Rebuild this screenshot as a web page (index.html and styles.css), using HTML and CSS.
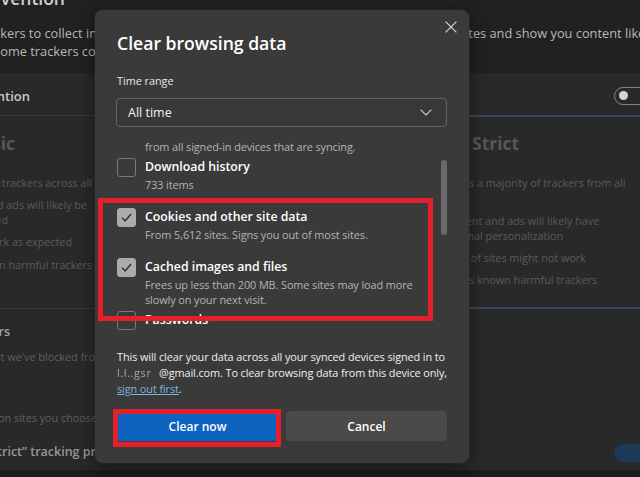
FILE: index.html
```html
<!DOCTYPE html>
<html lang="en">
<head>
<meta charset="utf-8">
<title>Clear browsing data</title>
<link rel="stylesheet" href="styles.css">
</head>
<body>
<div class="page">
  <section class="band intro">
    <div class="cell left">
      <div class="ln h-big">Tracking prevention</div>
      <div class="ln t-intro intro-l1">Websites use trackers to collect info</div>
      <div class="ln t-intro intro-l2">about your browsing. Some trackers collect</div>
    </div>
    <div class="cell"></div>
    <div class="cell right">
      <div class="ln t-intro intro-r1">sites and show you content like personalized ads.</div>
    </div>
  </section>

  <section class="band head">
    <div class="cell left">
      <div class="ln h-sec head-l">Tracking prevention</div>
    </div>
    <div class="cell"></div>
    <div class="cell right">
      <div class="toggle off head-t"><span class="knob"></span></div>
    </div>
  </section>

  <section class="band cards">
    <div class="cell left card-basic">
      <div class="ln h-card basic-h">Basic</div>
      <div class="ln bl b1">Allows most trackers across all</div>
      <div class="ln bl b2">Content and ads will likely be</div>
      <div class="ln bl b2b">personalized</div>
      <div class="ln bl b3">Sites will work as expected</div>
      <div class="ln bl b4">Blocks known harmful trackers</div>
    </div>
    <div class="cell"></div>
    <div class="cell right card-strict">
      <div class="ln h-card strict-h">Strict</div>
      <ul class="bullets">
        <li>Blocks a majority of trackers from all<br>sites</li>
        <li>Content and ads will likely have<br>minimal personalization</li>
        <li>Parts of sites might not work</li>
        <li>Blocks known harmful trackers</li>
      </ul>
    </div>
  </section>

  <section class="band track">
    <div class="cell left">
      <div class="ln h-sub tr-h">Blocked trackers</div>
      <div class="ln dim tr-1">View the sites that we've blocked from</div>
      <div class="ln dim tr-2">Allow all trackers on sites you choose</div>
      <div class="ln h-sub2 tr-3">Always use “Strict” tracking prevention</div>
    </div>
    <div class="cell"></div>
    <div class="cell right">
      <div class="toggle on tr-t"><span class="knob"></span></div>
    </div>
  </section>

  <div class="foot"></div>
</div>

<div class="dialog" role="dialog" aria-label="Clear browsing data">
  <button class="close" aria-label="Close">
    <svg width="12" height="12" viewBox="0 0 12 12"><path d="M0.6 0.6 L11.4 11.4 M11.4 0.6 L0.6 11.4" stroke="#d4d4d4" stroke-width="1.2" fill="none"/></svg>
  </button>
  <h1 class="title">Clear browsing data</h1>
  <div class="label">Time range</div>
  <div class="select">
    <span>All time</span>
    <svg width="12" height="7" viewBox="0 0 12 7"><path d="M0.6 0.6 L6 6 L11.4 0.6" stroke="#cfcfcf" stroke-width="1.1" fill="none"/></svg>
  </div>
  <div class="list">
    <div class="list-inner">
      <div class="item">
        <span class="cb on"><svg width="19" height="19" viewBox="0 0 19 19"><path d="M5 9.8 L8.2 13 L14 6" stroke="#2f2f2f" stroke-width="1.5" fill="none"/></svg></span>
        <div class="itxt"><div class="it">Browsing history</div><div class="id">1,206 items. Includes autocompletions. Clears history<br>from all signed-in devices that are syncing.</div></div>
      </div>
      <div class="item">
        <span class="cb"></span>
        <div class="itxt"><div class="it">Download history</div><div class="id">733 items</div></div>
      </div>
      <div class="item">
        <span class="cb on"><svg width="19" height="19" viewBox="0 0 19 19"><path d="M5 9.8 L8.2 13 L14 6" stroke="#2f2f2f" stroke-width="1.5" fill="none"/></svg></span>
        <div class="itxt"><div class="it">Cookies and other site data</div><div class="id">From 5,612 sites. Signs you out of most sites.</div></div>
      </div>
      <div class="item">
        <span class="cb on"><svg width="19" height="19" viewBox="0 0 19 19"><path d="M5 9.8 L8.2 13 L14 6" stroke="#2f2f2f" stroke-width="1.5" fill="none"/></svg></span>
        <div class="itxt"><div class="it">Cached images and files</div><div class="id">Frees up less than 200 MB. Some sites may load more<br>slowly on your next visit.</div></div>
      </div>
      <div class="item">
        <span class="cb"></span>
        <div class="itxt"><div class="it">Passwords</div><div class="id">None</div></div>
      </div>
    </div>
    <div class="thumb"></div>
  </div>
  <p class="note">This will clear your data across all your synced devices signed in to<br><span class="redact">l.l..gsr</span>@gmail.com. To clear browsing data from this device only,<br><a href="#">sign out first</a>.</p>
  <div class="actions">
    <div class="btn-wrap">
      <button class="btn primary">Clear now</button>
      <span class="hl hl-btn"></span>
    </div>
    <button class="btn">Cancel</button>
  </div>
  <span class="hl hl-list"></span>
</div>
</body>
</html>
```

FILE: styles.css
```css
* { box-sizing: border-box; margin: 0; padding: 0; }
html, body { width: 640px; height: 477px; overflow: hidden; }
body {
  background: #1d1d1d;
  font-family: "Open Sans", "Noto Sans", "DejaVu Sans", sans-serif;
  color: #fff;
  position: relative;
}

/* ---------- background settings page ---------- */
.page { display: flex; flex-direction: column; width: 640px; height: 477px; }
.band { display: grid; grid-template-columns: 95px 374px 171px; flex: none; }
.intro { height: 73px; background: #212121; }
.head { height: 42px; background: #292929; }
.cards { height: 194px; background: #292929; }
.track { height: 161px; background: #292929; }
.foot { height: 7px; background: #1c1c1c; }

.cell { min-width: 0; overflow: hidden; display: flex; flex-direction: column; }
.left { align-items: flex-end; }
.right { align-items: flex-start; }
.ln { white-space: nowrap; flex: none; }

.h-big { font-size: 17.5px; font-weight: 600; line-height: 24px; color: #d0d0d0; margin-top: -14px; padding-right: 30px; }
.t-intro { font-size: 12.8px; line-height: 18px; color: #b8b8b8; }
.intro-l1 { margin-top: 14px; margin-right: -14px; }
.intro-l2 { margin-right: -25px; }
.intro-r1 { margin-top: 24px; margin-left: -10px; }

.h-sec { font-size: 13px; font-weight: 600; line-height: 18px; color: #c8c8c8; }
.head-l { margin-top: 14px; padding-right: 65px; }

.toggle { position: relative; width: 36px; height: 18px; border-radius: 9px; flex: none; margin-left: 145px; }
.toggle.off { border: 1px solid #858585; }
.toggle.on { background: #1b3a58; }
.knob { position: absolute; top: 4px; width: 9px; height: 9px; border-radius: 50%; }
.toggle.off .knob { left: 4px; top: 3px; background: #d4d4d4; }
.toggle.on .knob { right: -1px; top: 4.5px; background: #6e8fae; }
.head-t { margin-top: 14px; }

.card-basic { border-top: 1px solid #393939; border-bottom: 1px solid #393939; }
.card-strict { border-top: 2px solid #374859; border-bottom: 2px solid #374859; }
.h-card { font-size: 17.5px; font-weight: 700; line-height: 24px; color: #575757; }
.basic-h { margin-top: 15px; padding-right: 80px; }
.strict-h { margin-top: 14px; margin-left: 3px; }

.bl { font-size: 10.8px; line-height: 15px; color: #5b5b5b; }
.b1 { margin-top: 20px; padding-right: 3px; }
.b2 { margin-top: 7px; padding-right: 8px; }
.b2b { padding-right: 87px; }
.b3 { margin-top: 7px; padding-right: 23px; }
.b4 { margin-top: 8px; padding-right: 3px; }

.bullets { list-style: none; margin-top: 20px; margin-left: -27px; font-size: 10.8px; line-height: 15px; color: #5b5b5b; white-space: nowrap; }
.bullets li { margin-bottom: 8px; }
.bullets li:nth-child(2), .bullets li:nth-child(3) { margin-bottom: 7px; }

.h-sub { font-size: 12.5px; font-weight: 600; line-height: 18px; color: #a4a4a4; }
.h-sub2 { font-size: 12.5px; font-weight: 600; line-height: 18px; color: #979797; }
.dim { font-size: 10.8px; line-height: 15px; color: #5f5f5f; }
.tr-h { margin-top: 14px; padding-right: 85px; }
.tr-1 { margin-top: 8px; margin-right: -10px; }
.tr-2 { margin-top: 46px; margin-right: -2px; }
.tr-3 { margin-top: 18px; margin-right: -54px; }
.tr-t { margin-top: 135px; }

/* ---------- dialog ---------- */
.dialog {
  position: absolute;
  left: 95px; top: 10px;
  width: 374px; height: 453px;
  background: #3a3a3a;
  border-radius: 8px;
  padding: 0 22px;
  display: flex; flex-direction: column;
  box-shadow: 0 4px 18px rgba(0,0,0,.5), 0 0 0 1px rgba(255,255,255,.05);
}
.close {
  position: absolute; top: 11px; right: 12px;
  width: 12px; height: 12px;
  background: none; border: 0; display: block;
}
.close svg { display: block; }
.title { font-size: 17.6px; font-weight: 600; line-height: 24px; margin-top: 21px; color: #fff; white-space: nowrap; }
.label { font-size: 10.8px; line-height: 16px; margin-top: 18px; color: #e8e8e8; }
.select {
  margin-top: 9px; margin-left: -1px;
  height: 29px;
  border: 1px solid #646464; border-radius: 4px;
  background: #383838;
  display: flex; align-items: center; justify-content: space-between;
  padding: 0 14px 0 11px;
  font-size: 12.5px; color: #f2f2f2;
  flex: none;
}
.select svg { display: block; }

.list { margin-top: 13px; height: 192px; overflow: hidden; position: relative; flex: none; }
.list-inner { margin-top: -35px; }
.item { display: flex; gap: 9px; min-height: 50px; padding-bottom: 4px; }
.cb { flex: none; width: 19px; height: 19px; border: 1px solid #7b7b7b; border-radius: 3px; display: block; }
.cb.on { background: #ababab; border-color: #ababab; }
.cb svg { display: block; margin: -1px; }
.it { font-size: 12.3px; font-weight: 600; line-height: 18px; color: #fff; white-space: nowrap; }
.id { font-size: 10.9px; line-height: 15px; margin-top: 1px; color: #b4b4b4; white-space: nowrap; letter-spacing: -0.1px; }
.thumb { position: absolute; right: 0; top: 20px; width: 6px; height: 75px; border-radius: 3px; background: #6a6a6a; }

.note { margin-top: 17px; font-size: 10.9px; line-height: 16px; color: #f0f0f0; white-space: nowrap; letter-spacing: -0.1px; }
.note a { color: #7cb3e0; text-decoration: underline; }
.redact { display: inline-block; width: 42px; color: #d8d8d8; opacity: .7; letter-spacing: 0.6px; filter: blur(0.35px); overflow: hidden; vertical-align: bottom; }

.actions { margin-top: 14px; display: grid; grid-template-columns: 1fr 1fr; gap: 8px; flex: none; }
.btn {
  display: block; width: 100%; height: 30px;
  border: 0; border-radius: 4px;
  font-family: inherit; font-size: 12px; font-weight: 600; color: #fff;
  background: #4a4a4a;
}
.btn.primary { background: #0d63bf; }
.btn-wrap { position: relative; }

.hl { position: absolute; border: 5px solid #e3202b; pointer-events: none; display: block; }
.hl-list { left: 3px; top: 188px; width: 335px; height: 123px; }
.hl-btn { left: -4px; top: -2px; right: -3px; bottom: -6px; }
```
